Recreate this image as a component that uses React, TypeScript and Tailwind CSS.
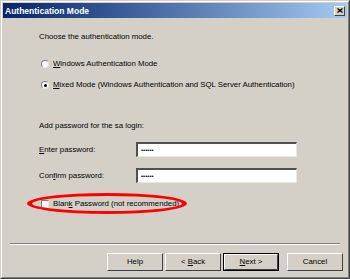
// AuthenticationMode - SQL Server setup dialog (classic Windows look)

const raised =
  'border border-t-white border-l-white border-r-[#404040] border-b-[#404040]';

function Radio({ checked }: { checked?: boolean }) {
  return (
    <span className="relative w-[8px] h-[8px] rounded-full bg-white border border-t-[#808080] border-l-[#808080] border-r-[#e8e6e0] border-b-[#e8e6e0] flex items-center justify-center">
      {checked && <span className="w-[3px] h-[3px] rounded-full bg-black" />}
    </span>
  );
}

function Field() {
  return (
    <div className="w-[161px] h-[15px] bg-white border-t-2 border-l-2 border-t-[#505050] border-l-[#505050] border-r border-b border-r-[#e8e6e0] border-b-[#e8e6e0] flex items-center pl-[3px]">
      <span className="text-[6px] leading-[6px] tracking-[0px] text-black">••••••</span>
    </div>
  );
}

function Button({ label, u, rest, def }: { label: string; u?: string; rest?: string; def?: boolean }) {
  return (
    <div className={def ? 'border border-black' : ''}>
      <div
        className={`${raised} bg-[#d4d0c8] flex items-center justify-center ${
          def ? 'w-[54px] h-[16px]' : 'w-[56px] h-[18px]'
        }`}
      >
        <span className="text-[7.8px] leading-[10px] text-black">
          {label}
          {u && <span className="underline">{u}</span>}
          {rest}
        </span>
      </div>
    </div>
  );
}

export default function App() {
  return (
    <div
      className="w-[350px] h-[279px] bg-[#d4d0c8] border border-t-[#d4d0c8] border-l-[#d4d0c8] border-r-[#404040] border-b-[#404040] overflow-hidden"
      style={{ fontFamily: '"Liberation Sans", Arial, sans-serif' }}
    >
      <div className="w-full h-full border border-t-white border-l-white border-r-[#808080] border-b-[#808080] p-[1px] flex flex-col text-black">
        {/* title bar */}
        <div className="h-[15px] bg-gradient-to-r from-[#0a246a] to-[#a6caf0] flex items-center justify-between pl-[2px] pr-[2px]">
          <span className="text-white font-bold text-[8.5px] leading-[10px]">Authentication Mode</span>
          <div className={`${raised} w-[11px] h-[10px] bg-[#d4d0c8] flex items-center justify-center`}>
            <svg width="6" height="5" viewBox="0 0 6 5">
              <path d="M0.5 0.5 L5.5 4.5 M5.5 0.5 L0.5 4.5" stroke="black" strokeWidth="1.3" />
            </svg>
          </div>
        </div>

        {/* body */}
        <div className="flex-1 pl-[36px] text-[7.8px] leading-[10px]">
          <p className="mt-[14px]">Choose the authentication mode.</p>

          <div className="mt-[17px] flex items-center gap-[4px] pl-[2px]">
            <Radio />
            <span>
              <span className="underline">W</span>indows Authentication Mode
            </span>
          </div>
          <div className="mt-[11px] flex items-center gap-[4px] pl-[2px]">
            <Radio checked />
            <span>
              <span className="underline">M</span>ixed Mode (Windows Authentication and SQL Server Authentication)
            </span>
          </div>

          <p className="mt-[31px]">Add password for the sa login:</p>

          <div className="mt-[11px] flex items-center">
            <span className="w-[97px]">
              <span className="underline">E</span>nter password:
            </span>
            <Field />
          </div>
          <div className="mt-[11px] flex items-center">
            <span className="w-[97px]">
              Con<span className="underline">f</span>irm password:
            </span>
            <Field />
          </div>

          <div className="relative mt-[16px] flex items-center gap-[4px] pl-[2px]">
            <span className="w-[8px] h-[8px] bg-white border border-t-[#808080] border-l-[#808080] border-r-[#e8e6e0] border-b-[#e8e6e0]" />
            <span>
              Blan<span className="underline">k</span> Password (not recommended)
            </span>
            {/* red highlight ellipse */}
            <div className="absolute left-[-12px] top-[-6px] w-[160px] h-[21px] rounded-[50%] border-[#ff0000] border-y-[3px] border-x-[5px]" />
          </div>
        </div>

        {/* footer */}
        <div className="mx-[7px] border-t border-t-[#808080] border-b border-b-white" />
        <div className="flex justify-end items-center pr-[4px] mt-[8px] mb-[5px]">
          <Button label="Help" />
          <div className="ml-[2px]">
            <Button label="< " u="B" rest="ack" />
          </div>
          <div className="ml-[2px]">
            <Button label="" u="N" rest="ext >" def />
          </div>
          <div className="ml-[8px]">
            <Button label="Cancel" />
          </div>
        </div>
      </div>
    </div>
  );
}
